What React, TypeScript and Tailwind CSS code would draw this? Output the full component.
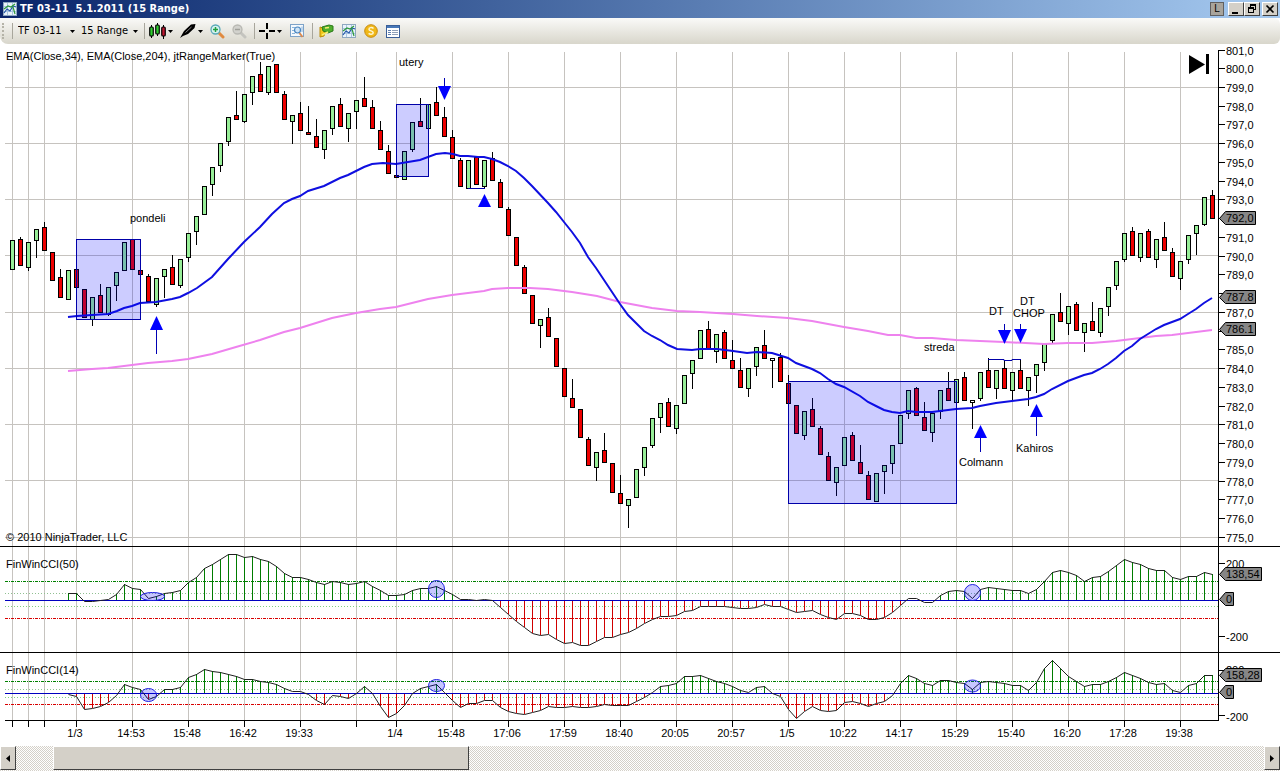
import React from 'react';

const FIRST_X = 12;
const STEP = 8;

type Candle = [high: number, top: number, bottom: number, low: number, kind: 0 | 1 | 2];

const FILLS = ['#ee0000', '#98ee98', '#ffffff'];

// one entry per bar: high, body top, body bottom, low, kind (0 down, 1 up, 2 flat)
const CANDLES: Candle[] = [
  [240, 240, 269, 269, 1], [237, 239, 265, 265, 0], [242, 242, 267, 270, 1], [229, 229, 240, 257, 1], [222, 227, 250, 250, 0],
  [252, 252, 280, 280, 0], [269, 277, 297, 297, 0], [270, 270, 299, 299, 1], [269, 269, 287, 287, 0], [289, 289, 317, 317, 0],
  [297, 297, 319, 325, 1], [284, 295, 312, 312, 0], [287, 287, 314, 315, 1], [272, 272, 285, 300, 1], [242, 242, 270, 270, 1],
  [239, 239, 269, 269, 0], [270, 270, 274, 274, 0], [274, 276, 301, 301, 0], [278, 278, 304, 306, 1], [269, 269, 276, 297, 1],
  [255, 267, 284, 284, 0], [259, 259, 285, 287, 1], [233, 233, 257, 261, 1], [216, 216, 231, 244, 1], [186, 186, 214, 214, 1],
  [167, 167, 184, 195, 1], [143, 143, 165, 171, 1], [117, 117, 141, 145, 1], [91, 115, 119, 119, 0], [94, 94, 121, 122, 1],
  [76, 76, 92, 104, 1], [62, 74, 91, 91, 0], [66, 66, 92, 94, 1], [64, 64, 92, 92, 0], [91, 94, 119, 119, 0],
  [115, 115, 121, 143, 1], [102, 113, 130, 130, 0], [106, 132, 134, 134, 0], [119, 136, 147, 147, 0], [130, 130, 149, 158, 1],
  [106, 106, 128, 134, 1], [98, 104, 126, 126, 0], [113, 113, 128, 141, 1], [100, 100, 111, 128, 1], [77, 98, 106, 106, 0],
  [100, 107, 128, 128, 0], [121, 130, 149, 149, 0], [145, 151, 173, 173, 0], [175, 175, 177, 177, 0], [151, 151, 179, 179, 1],
  [122, 122, 149, 151, 1], [98, 121, 126, 126, 0], [104, 104, 128, 128, 1], [87, 102, 115, 115, 0], [107, 117, 136, 136, 0],
  [130, 137, 158, 158, 0], [158, 160, 186, 186, 0], [160, 160, 188, 188, 1], [156, 157, 184, 184, 0], [160, 160, 186, 188, 1],
  [152, 158, 180, 180, 0], [179, 182, 207, 207, 0], [207, 209, 235, 235, 0], [237, 237, 265, 265, 0], [265, 267, 293, 293, 0],
  [295, 295, 323, 323, 0], [319, 319, 325, 347, 1], [308, 317, 336, 336, 0], [338, 338, 366, 366, 0], [368, 368, 396, 396, 0],
  [379, 398, 407, 407, 0], [409, 409, 437, 437, 0], [437, 439, 465, 465, 0], [452, 452, 467, 480, 1], [433, 450, 462, 462, 0],
  [463, 463, 492, 492, 0], [475, 493, 503, 503, 0], [499, 499, 505, 527, 1], [469, 469, 497, 497, 1], [447, 447, 467, 475, 1],
  [418, 418, 445, 447, 1], [403, 403, 417, 432, 1], [398, 402, 426, 426, 0], [405, 405, 428, 433, 1], [375, 375, 403, 403, 1],
  [360, 360, 373, 388, 1], [330, 330, 358, 358, 1], [321, 329, 348, 348, 0], [334, 334, 351, 362, 1], [330, 332, 358, 358, 0],
  [340, 360, 368, 368, 0], [358, 370, 387, 387, 0], [368, 368, 388, 396, 1], [347, 347, 366, 375, 1], [330, 345, 358, 358, 0],
  [358, 358, 360, 387, 2], [353, 357, 381, 381, 0], [375, 383, 403, 403, 0], [405, 405, 433, 433, 0], [411, 411, 435, 439, 1],
  [398, 409, 426, 426, 0], [426, 428, 454, 454, 0], [452, 456, 480, 480, 0], [467, 467, 482, 495, 1], [437, 437, 465, 465, 1],
  [432, 435, 460, 460, 0], [445, 462, 473, 473, 0], [471, 475, 499, 499, 0], [473, 473, 501, 501, 1], [465, 465, 471, 493, 1],
  [445, 445, 463, 473, 1], [415, 415, 443, 443, 1], [390, 390, 413, 418, 1], [387, 388, 415, 415, 0], [402, 417, 430, 430, 0],
  [413, 413, 432, 441, 1], [390, 390, 411, 418, 1], [372, 388, 400, 400, 0], [379, 379, 402, 402, 1], [372, 377, 400, 400, 0],
  [400, 400, 402, 428, 2], [372, 372, 398, 400, 1], [358, 370, 387, 387, 0], [370, 370, 388, 398, 1], [360, 368, 388, 388, 0],
  [372, 372, 390, 399, 1], [360, 370, 388, 388, 0], [377, 377, 390, 405, 1], [364, 364, 375, 392, 1], [343, 343, 362, 370, 1],
  [314, 314, 340, 342, 1], [293, 312, 321, 321, 0], [306, 306, 323, 334, 1], [302, 304, 330, 330, 0], [323, 323, 332, 351, 1],
  [302, 321, 330, 330, 0], [308, 308, 332, 336, 1], [287, 287, 306, 315, 1], [261, 261, 285, 289, 1], [233, 233, 259, 261, 1],
  [227, 231, 255, 255, 0], [233, 233, 257, 261, 1], [229, 231, 257, 257, 0], [239, 239, 259, 267, 1], [222, 237, 250, 250, 0],
  [248, 252, 276, 276, 0], [261, 261, 278, 289, 1], [235, 235, 259, 263, 1], [225, 225, 233, 254, 1], [197, 197, 224, 225, 1],
  [190, 195, 218, 218, 0],
];

const EMA_FAST =
  '68,317 77,316 92,315 108,314 117,311 124,308 132,306 140,303 156,302 172,299 180,297 188,293 197,288 212,277 228,259 244,242 260,227 272,214 284,203 292,199 300,196 308,191 324,186 340,178 348,175 364,167 372,164 383,163 396,164 408,162 420,160 436,154 445,153 453,154 460,156 468,156 478,157 484,157 492,159 500,162 508,166 516,171 524,178 532,186 548,203 556,212 564,222 572,232 580,243 588,257 596,268 604,280 612,292 620,304 628,315 636,323 644,331 652,336 660,340 668,345 677,349 692,350 700,349 717,349 733,351 747,353 757,352 772,353 788,358 796,363 812,369 820,373 828,379 836,384 844,387 860,396 868,402 876,406 884,410 892,412 900,413 908,411 916,412 932,412 940,411 956,409 972,408 980,406 996,403 1012,401 1028,399 1036,397 1044,394 1052,389 1068,381 1084,375 1092,373 1100,369 1108,364 1116,358 1124,351 1132,346 1140,339 1148,334 1156,329 1164,325 1180,319 1188,314 1196,309 1204,303 1212,298';

const EMA_SLOW =
  '68,371 92,369 108,368 148,363 172,361 188,359 212,354 236,347 260,340 284,332 300,328 332,318 356,313 380,309 396,307 412,303 428,299 452,295 468,293 484,291 492,289 508,288 530,288 548,289 572,292 597,296 620,302 636,305 652,308 677,311 700,312 733,314 757,316 788,318 812,321 844,327 868,331 888,335 900,335 916,338 932,338 956,340 980,341 1004,342 1044,344 1068,343 1092,343 1116,341 1140,338 1156,336 1172,335 1188,333 1212,330';

// indicator plots, both start at the eighth bar
const CCI_50 = [
  593, 593, 601, 601, 600, 599, 594, 584, 588, 589, 598, 596, 593, 592, 590, 582, 577, 568, 564, 559, 554, 554, 557, 556,
  559, 561, 566, 573, 577, 577, 579, 582, 584, 581, 582, 584, 583, 581, 586, 590, 595, 595, 594, 590, 588, 588, 586, 590,
  594, 599, 599, 600, 599, 600, 607, 614, 621, 627, 633, 635, 634, 639, 643, 642, 645, 645, 641, 637, 637, 634, 632, 628,
  623, 619, 616, 616, 615, 611, 610, 606, 606, 606, 606, 607, 608, 608, 607, 604, 606, 606, 609, 612, 611, 610, 614, 617,
  619, 613, 613, 615, 619, 619, 617, 612, 605, 598, 598, 602, 602, 595, 591, 590, 591, 598, 589, 587, 588, 589, 590, 590,
  593, 589, 581, 572, 570, 572, 575, 581, 577, 576, 571, 565, 559, 562, 564, 568, 570, 570, 577, 579, 576, 576, 572, 574,
];

const CCI_14 = [
  694, 696, 709, 708, 706, 702, 695, 684, 687, 689, 699, 696, 689, 689, 687, 677, 674, 669, 671, 672, 674, 676, 679, 679,
  681, 682, 684, 688, 691, 691, 694, 700, 704, 695, 696, 698, 693, 686, 693, 706, 717, 713, 705, 693, 688, 686, 684, 692,
  700, 707, 703, 703, 700, 700, 707, 711, 713, 714, 712, 710, 706, 707, 707, 706, 707, 707, 706, 704, 705, 705, 705, 701,
  697, 692, 686, 685, 683, 676, 676, 675, 678, 681, 683, 686, 690, 692, 687, 686, 693, 696, 709, 718, 711, 706, 710, 711,
  710, 702, 701, 703, 706, 703, 701, 695, 683, 675, 678, 683, 685, 680, 680, 682, 683, 689, 682, 681, 682, 683, 685, 685,
  690, 682, 668, 660, 668, 676, 681, 686, 684, 684, 681, 677, 672, 675, 678, 682, 684, 683, 690, 692, 685, 683, 675, 675,
];

const TIMES: [number, string][] = [
  [12, ''], [28, ''], [44, ''], [76, '1/3'], [132, '14:53'], [188, '15:48'], [244, '16:42'], [300, '19:33'], [356, ''],
  [396, '1/4'], [452, '15:48'], [508, '17:06'], [564, '17:59'], [620, '18:40'], [676, '20:05'], [732, '20:57'],
  [788, '1/5'], [844, '10:22'], [900, '14:17'], [956, '15:29'], [1012, '15:40'], [1068, '16:20'], [1124, '17:28'],
  [1180, '19:38'],
];

const PRICE_LINES = [87, 143, 199, 255, 312, 368, 424, 480, 537];

const PRICES = Array.from({ length: 27 }, (_, i) => 801 - i);
const HIDDEN_PRICES = [792, 788, 786];

const NOTES: [number, number, string][] = [
  [6, 60, 'EMA(Close,34), EMA(Close,204), jtRangeMarker(True)'],
  [399, 66, 'utery'],
  [130, 222, 'pondeli'],
  [924, 351, 'streda'],
  [959, 466, 'Colmann'],
  [1016, 452, 'Kahiros'],
  [989, 315, 'DT'],
  [1020, 305, 'DT'],
  [1013, 317, 'CHOP'],
  [6, 541, '© 2010 NinjaTrader, LLC'],
  [6, 568, 'FinWinCCI(50)'],
  [6, 674, 'FinWinCCI(14)'],
];

function Arrow({ x, tip, base, stem }: { x: number; tip: number; base: number; stem: number }) {
  return (
    <g>
      <path d={`M${x + 0.5} ${base}V${stem}`} stroke="#0000b4" />
      <path d={`M${x + 0.5} ${tip}L${x - 6} ${base}H${x + 7}Z`} fill="#0000ff" />
    </g>
  );
}

function Badge({ y, width, text }: { y: number; width: number; text: string }) {
  const right = 1219.5 + width;
  return (
    <g>
      <path
        d={`M1219.5 ${y + 0.5}L1225.5 ${y - 6.5}H${right}V${y + 6.5}H1225.5Z`}
        fill="#868686"
        stroke="#000"
      />
      <text x={1226} y={y + 4}>{text}</text>
    </g>
  );
}

interface CciProps {
  values: number[];
  zero: number;
  upper: number;
  upperInner: number;
  lowerInner: number;
  lower: number;
}

function CciPanel({ values, zero, upper, upperInner, lowerInner, lower }: CciProps) {
  const xs = values.map((_, i) => FIRST_X + (i + 7) * STEP + 0.5);
  return (
    <g>
      <path d={`M5 ${upper + 0.5}H1218`} stroke="#008000" strokeDasharray="3 1 1 1" />
      <path d={`M5 ${upperInner + 0.5}H1218`} stroke="#90c090" strokeDasharray="1 2" />
      <path d={`M5 ${lowerInner + 0.5}H1218`} stroke="#80d080" strokeDasharray="1 2" />
      <path d={`M5 ${lower + 0.5}H1218`} stroke="#d80000" strokeDasharray="3 1 1 1" />
      {values.map((v, i) =>
        Math.abs(v - zero) > 2 ? (
          <path key={i} d={`M${xs[i]} ${v}V${zero}`} stroke={v < zero ? '#007c00' : '#d00000'} />
        ) : null
      )}
      <path d={`M5 ${zero + 0.5}H1218`} stroke="#0000c0" />
      <polyline points={values.map((v, i) => `${xs[i]},${v + 0.5}`).join(' ')} fill="none" stroke="#202020" />
    </g>
  );
}

function Chart() {
  return (
    <svg
      viewBox="0 44 1280 702"
      className="block w-full bg-white font-['Liberation_Sans',Arial,sans-serif] text-[11px]"
      role="img"
      aria-label="TF 03-11 price chart"
    >
      <g stroke="#c6c3bf">
        {TIMES.map(([x]) => (
          <path key={x} d={`M${x + 0.5} 52V720`} />
        ))}
        {PRICE_LINES.map((y) => (
          <path key={y} d={`M5 ${y + 0.5}H1218`} />
        ))}
      </g>

      {CANDLES.map(([high, top, bottom, low, kind], i) => {
        const x = FIRST_X + i * STEP;
        return (
          <g key={i}>
            <rect x={x} y={high} width={1} height={low - high + 1} />
            <rect x={x - 2} y={top} width={5} height={bottom - top + 1} />
            <rect x={x - 1} y={top + 1} width={3} height={bottom - top - 1} fill={FILLS[kind]} />
          </g>
        );
      })}

      <polyline points={EMA_SLOW} fill="none" stroke="#ee82ee" strokeWidth={2} />
      <polyline points={EMA_FAST} fill="none" stroke="#0f0fe0" strokeWidth={2} />

      <g fill="#0000ff" fillOpacity={0.2} stroke="#0000a8">
        <rect x={76.5} y={239.5} width={64} height={80} />
        <rect x={396.5} y={104.5} width={32} height={72} />
        <rect x={788.5} y={381.5} width={168} height={122} />
      </g>

      <path d="M468 188.5H485M988 359.5H1004V360.5H1012V359.5H1021" fill="none" stroke="#0000a8" />

      <Arrow x={156} tip={316} base={330} stem={354} />
      <Arrow x={444} tip={100} base={86} stem={78} />
      <Arrow x={484} tip={194} base={207} stem={207} />
      <Arrow x={980} tip={425} base={438} stem={452} />
      <Arrow x={1036} tip={404} base={417} stem={436} />
      <Arrow x={1004} tip={344} base={330} stem={324} />
      <Arrow x={1020} tip={343} base={329} stem={324} />

      <CciPanel values={CCI_50} zero={600} upper={581} upperInner={593} lowerInner={606} lower={618} />
      <CciPanel values={CCI_14} zero={693} upper={681} upperInner={689} lowerInner={697} lower={704} />

      <g fill="#0000ff" fillOpacity={0.22} stroke="#2020e0">
        <ellipse cx={152.5} cy={596.5} rx={12} ry={4} />
        <ellipse cx={436.5} cy={589} rx={8} ry={8.5} />
        <ellipse cx={972.5} cy={592.5} rx={8} ry={8} />
        <ellipse cx={148.5} cy={695} rx={8} ry={6.5} />
        <ellipse cx={436.5} cy={685.5} rx={8} ry={6} />
        <ellipse cx={972.5} cy={686} rx={8} ry={6} />
      </g>

      <g stroke="#000">
        <path d="M0 546.5H1280M0 652.5H1280M5 720.5H1219M1218.5 50V721" />
        {TIMES.map(([x]) => (
          <path key={x} d={`M${x + 0.5} 721V727`} />
        ))}
        {PRICES.map((p) => (
          <path key={p} d={`M1219 ${Math.floor(50 + (801 - p) * 18.74) + 0.5}H1225`} />
        ))}
        <path d="M1219 563.5H1225M1219 636.5H1225M1219 670.5H1225M1219 715.5H1225" />
      </g>

      <path d="M1189 55V74L1205 64.5Z" />
      <rect x={1206} y={54} width={3} height={20} />

      {PRICES.filter((p) => !HIDDEN_PRICES.includes(p)).map((p) => (
        <text key={p} x={1226} y={Math.floor(55 + (801 - p) * 18.74)}>{`${p},0`}</text>
      ))}
      <text x={1226} y={568}>200</text>
      <text x={1226} y={641}>-200</text>
      <text x={1226} y={674}>200</text>
      <text x={1226} y={721}>-200</text>

      <Badge y={218} width={36} text="792,0" />
      <Badge y={297} width={36} text="787.8" />
      <Badge y={329} width={36} text="786.1" />
      <Badge y={574} width={42} text="138,54" />
      <Badge y={599} width={14} text="0" />
      <Badge y={675} width={42} text="158,28" />
      <Badge y={692} width={14} text="0" />

      {NOTES.map(([x, y, text]) => (
        <text key={`${x}-${y}`} x={x} y={y}>{text}</text>
      ))}
      {TIMES.filter(([, label]) => label).map(([x, label]) => (
        <text key={x} x={x - 1} y={737} textAnchor="middle">{label}</text>
      ))}
    </svg>
  );
}

function Caret() {
  return (
    <svg viewBox="0 0 5 3" className="pointer-events-none h-[3px] w-[5px] shrink-0" aria-hidden="true">
      <path d="M0 0H5L2.5 3Z" />
    </svg>
  );
}

function Separator() {
  return <span className="h-4 w-px shrink-0 bg-[#a8a69c]" />;
}

function ChartIcon() {
  return (
    <svg viewBox="0 0 14 14" className="size-[14px] shrink-0" aria-hidden="true">
      <rect x="0.5" y="0.5" width="13" height="13" fill="#eaf3fb" stroke="#8fa8c0" />
      <path d="M1 4.5H13M1 9.5H13M4.5 1V13M9.5 1V13" stroke="#a9c6e2" />
      <path d="M1 11L4 7L7 9L10 4L13 5" fill="none" stroke="#2456a8" strokeWidth="1.2" />
      <path d="M1 7L5 4L8 5L12 2M10 5L12 12" fill="none" stroke="#2e9a3a" strokeWidth="1.2" />
    </svg>
  );
}

function CandlesIcon() {
  return (
    <svg viewBox="0 0 17 16" className="h-4 w-[17px]" aria-hidden="true">
      <path d="M2.5 2V15M8.5 0V13M14.5 2V16" stroke="#000" />
      <rect x="0.75" y="4" width="3.5" height="9" rx="1" fill="#30d030" stroke="#000" strokeWidth="1.2" />
      <rect x="6.75" y="2" width="3.5" height="9" rx="1" fill="#30d030" stroke="#000" strokeWidth="1.2" />
      <rect x="12.75" y="4" width="3.5" height="9" rx="1" fill="#c01830" stroke="#000" strokeWidth="1.2" />
    </svg>
  );
}

function PenIcon() {
  return (
    <svg viewBox="0 0 16 16" className="size-4" aria-hidden="true">
      <path d="M0 15L4 8L11 1.5L15.5 1L14.5 5L8 11L3 13Z" />
      <path d="M5.5 9.5L11.5 4" stroke="#8a8a8a" />
    </svg>
  );
}

function MagnifierIcon({ plus }: { plus?: boolean }) {
  return (
    <svg viewBox="0 0 15 15" className="size-[15px]" aria-hidden="true">
      <path d="M8.5 8.5L13 13" stroke={plus ? '#e08a40' : '#c4c4bf'} strokeWidth="3" strokeLinecap="round" />
      <circle cx="5.5" cy="5.5" r="4.5" fill={plus ? '#d8f2f0' : '#d2d2cd'} stroke={plus ? '#58a8b8' : '#b8b8b2'} strokeWidth="1.3" />
      <path d="M3 5.5H8" stroke={plus ? '#20a040' : '#a0a09a'} strokeWidth="1.5" />
      {plus && <path d="M5.5 3V8" stroke="#20a040" strokeWidth="1.5" />}
    </svg>
  );
}

function CrosshairIcon() {
  return (
    <svg viewBox="0 0 16 16" className="size-4" aria-hidden="true">
      <path d="M8 0V6M8 10V16M0 8H6M10 8H16" stroke="#000" strokeWidth="2" shapeRendering="crispEdges" />
    </svg>
  );
}

function DataBoxIcon() {
  return (
    <svg viewBox="0 0 14 14" className="size-[14px]" aria-hidden="true">
      <rect x="0.5" y="0.5" width="13" height="12" fill="#f4f9fd" stroke="#7ea3c8" />
      <path d="M2 3.5H5M2 6.5H4M2 9.5H5M12 2.5V8" stroke="#8ab4dc" />
      <circle cx="7.5" cy="6" r="3" fill="#cfe4f5" stroke="#4a86c0" strokeWidth="1.2" />
      <path d="M9.5 9L12.5 13" stroke="#d88a50" strokeWidth="2" />
    </svg>
  );
}

function OrderIcon() {
  return (
    <svg viewBox="0 0 15 14" className="h-[14px] w-[15px]" aria-hidden="true">
      <path d="M1 3L7 5L5 12L1 13Z" fill="#f2c71c" stroke="#b88a08" />
      <path d="M3 3L10 1L14 2V7L9 9L4 7Z" fill="#4fae2c" stroke="#2a7a18" />
      <path d="M6 4L10 3.5M3 11L9 8" stroke="#f8ee70" strokeWidth="1.5" />
    </svg>
  );
}

function CoinIcon() {
  return (
    <svg viewBox="0 0 14 14" className="size-[14px]" aria-hidden="true">
      <circle cx="7" cy="7" r="6.3" fill="#f0b818" stroke="#c88a10" />
      <path d="M9.5 4.5C8 3 4.8 3.4 5 5.3C5.2 7.2 9.2 6.6 9.2 8.7C9.2 10.5 6 10.7 4.6 9.4" fill="none" stroke="#fff6d0" strokeWidth="1.5" />
    </svg>
  );
}

function ListIcon() {
  return (
    <svg viewBox="0 0 14 13" className="h-[13px] w-[14px]" aria-hidden="true">
      <rect x="0.5" y="0.5" width="13" height="12" fill="#fff" stroke="#3a5f98" />
      <path d="M1 2H13" stroke="#4878b8" strokeWidth="2" />
      <path d="M2 5.5H5M2 7.5H5M2 9.5H5" stroke="#6080b0" />
      <path d="M6 5.5H12M6 7.5H12M6 9.5H12" stroke="#90a0b8" />
    </svg>
  );
}

function ToolButton({ label, caret, children }: { label: string; caret?: boolean; children: React.ReactNode }) {
  return (
    <button type="button" aria-label={label} className="flex h-5 shrink-0 items-center gap-0.5">
      {children}
      {caret && <Caret />}
    </button>
  );
}

function Picker({ label, value }: { label: string; value: string }) {
  return (
    <label className="flex shrink-0 items-center gap-1">
      <select aria-label={label} className="w-12 appearance-none bg-transparent">
        <option>{value}</option>
      </select>
      <Caret />
    </label>
  );
}

function Toolbar() {
  return (
    <div className="bg-white">
      <div className="flex h-[26px] items-center gap-2 rounded-bl-lg rounded-r-md bg-linear-to-b from-[#fafaf8] to-[#d8d6cb] pr-2 pl-[2px] font-['DejaVu_Sans_Condensed','DejaVu_Sans',sans-serif] text-[11px]">
        <span className="h-4 w-0.5 border-l-2 border-dotted border-[#b5b3a8]" />
        <div className="flex items-center gap-1.5">
          <Separator />
          <div className="-ml-px flex items-center gap-1.5">
            <Picker label="Instrument" value="TF 03-11" />
            <Picker label="Interval" value="15 Range" />
          </div>
          <Separator />
        </div>
        <div className="-ml-1 flex items-center gap-[7px]">
          <ToolButton label="Chart style" caret><CandlesIcon /></ToolButton>
          <ToolButton label="Drawing tools" caret><PenIcon /></ToolButton>
          <ToolButton label="Zoom in"><MagnifierIcon plus /></ToolButton>
          <ToolButton label="Zoom out"><MagnifierIcon /></ToolButton>
          <Separator />
        </div>
        <div className="-ml-1 flex items-center gap-2">
          <ToolButton label="Cursor" caret><CrosshairIcon /></ToolButton>
          <ToolButton label="Data box"><DataBoxIcon /></ToolButton>
          <Separator />
        </div>
        <div className="-ml-0.5 flex items-center gap-2">
          <ToolButton label="Order entry"><OrderIcon /></ToolButton>
          <ToolButton label="Indicators"><ChartIcon /></ToolButton>
          <ToolButton label="Strategies"><CoinIcon /></ToolButton>
          <ToolButton label="Properties"><ListIcon /></ToolButton>
        </div>
      </div>
    </div>
  );
}

const RAISED = 'border border-t-white border-l-white border-r-[#404040] border-b-[#404040] bg-[#d4d0c8]';

function TitleBar() {
  return (
    <header className="flex h-[18px] items-center bg-linear-to-r from-[#0a246a] to-[#a6caf0] pr-0.5 pl-[3px]">
      <ChartIcon />
      <h1 className="ml-[3px] grow text-[11px] leading-4 font-bold whitespace-pre text-white font-['DejaVu_Sans_Condensed','DejaVu_Sans',sans-serif]">
        TF 03-11  5.1.2011 (15 Range)
      </h1>
      <button
        type="button"
        className="mr-1 h-[14px] w-[14px] border border-[#606060] bg-[#a8a49c] text-[10px] leading-3 font-['Liberation_Sans',sans-serif]"
      >
        L
      </button>
      <button type="button" aria-label="Minimize" className={`h-[14px] w-4 ${RAISED}`}>
        <svg viewBox="0 0 14 12" className="block" aria-hidden="true"><path d="M3 9H9V11H3Z" /></svg>
      </button>
      <button type="button" aria-label="Restore" className={`h-[14px] w-4 ${RAISED}`}>
        <svg viewBox="0 0 14 12" className="block" aria-hidden="true">
          <path d="M5 1H11V7H9V6H10V3H6V4H5ZM3 4H9V10H3ZM4 6V9H8V6Z" fillRule="evenodd" />
        </svg>
      </button>
      <button type="button" aria-label="Close" className={`ml-0.5 h-[14px] w-4 ${RAISED}`}>
        <svg viewBox="0 0 14 12" className="block" aria-hidden="true">
          <path d="M3.5 2.5L10.5 9.5M10.5 2.5L3.5 9.5" stroke="#000" strokeWidth="1.7" />
        </svg>
      </button>
    </header>
  );
}

function ScrollBar() {
  return (
    <div className="flex h-[25px] bg-[repeating-conic-gradient(#ffffff_0_25%,#d4d0c8_0_50%)] bg-size-[2px_2px] pb-px">
      <button type="button" aria-label="Scroll left" className={`flex w-4 items-center justify-center ${RAISED}`}>
        <svg viewBox="0 0 4 7" className="h-[7px] w-1" aria-hidden="true"><path d="M4 0V7L0 3.5Z" /></svg>
      </button>
      <div className="flex grow">
        <div className="w-[3%]" />
        <div className={`w-1/3 ${RAISED}`} />
      </div>
      <button type="button" aria-label="Scroll right" className={`flex w-4 items-center justify-center ${RAISED}`}>
        <svg viewBox="0 0 4 7" className="h-[7px] w-1" aria-hidden="true"><path d="M0 0V7L4 3.5Z" /></svg>
      </button>
    </div>
  );
}

function App() {
  return (
    <div className="flex flex-col bg-white text-black">
      <TitleBar />
      <Toolbar />
      <main>
        <Chart />
      </main>
      <ScrollBar />
    </div>
  );
}

export default App;
